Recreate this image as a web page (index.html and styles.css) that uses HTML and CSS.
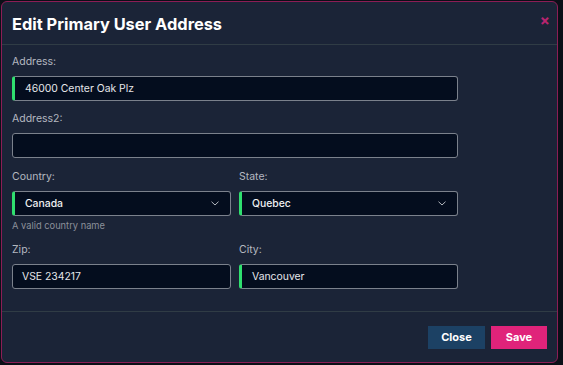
FILE: index.html
```html
<!DOCTYPE html>
<html lang="en">
<head>
    <meta charset="UTF-8">
    <title>Edit Primary User Address</title>
    <link rel="stylesheet" href="styles.css">
</head>
<body>
    <div class="modal">
        <div class="modal-header">
            <h2>Edit Primary User Address</h2>
            <span class="close">&times;</span>
        </div>
        <form class="modal-body">
            <div class="field">
                <label>Address:</label>
                <div class="input valid">46000 Center Oak Plz</div>
            </div>
            <div class="field">
                <label>Address2:</label>
                <div class="input"></div>
            </div>
            <div class="row">
                <div class="field">
                    <label>Country:</label>
                    <div class="input select valid">Canada
                        <svg width="8" height="5" viewBox="0 0 8 5"><path d="M0.5 0.7 L4 4 L7.5 0.7" fill="none" stroke="#b3b7be" stroke-width="1"/></svg>
                    </div>
                    <div class="help">A valid country name</div>
                </div>
                <div class="field">
                    <label>State:</label>
                    <div class="input select valid">Quebec
                        <svg width="8" height="5" viewBox="0 0 8 5"><path d="M0.5 0.7 L4 4 L7.5 0.7" fill="none" stroke="#b3b7be" stroke-width="1"/></svg>
                    </div>
                </div>
            </div>
            <div class="row">
                <div class="field">
                    <label>Zip:</label>
                    <div class="input plain">VSE 234217</div>
                </div>
                <div class="field">
                    <label>City:</label>
                    <div class="input valid">Vancouver</div>
                </div>
            </div>
        </form>
        <div class="modal-footer">
            <button class="btn btn-close">Close</button>
            <button class="btn btn-save">Save</button>
        </div>
    </div>
</body>
</html>
```

FILE: styles.css
```css
body { margin: 0; background: #0b0f17; font-family: Inter, "Noto Sans", sans-serif; color: #fff; padding: 1px 0 0 1px; }
.modal { width: 557px; height: 362px; background: #1b2437; border: 1px solid #8c1d55; border-radius: 6px; display: flex; flex-direction: column; box-sizing: border-box; }
.modal-header { height: 43px; display: flex; align-items: center; justify-content: space-between; padding: 0 7px 0 10px; border-bottom: 1px solid #303c45; box-sizing: border-box; }
.modal-header h2 { margin: 0; font-size: 16.4px; font-weight: 700; padding-top: 1px; }
.close { color: #b8246f; font-size: 15px; font-weight: 700; margin-top: -5px; }
.modal-body { flex: 1; width: 446px; padding: 10px 0 0 10px; display: flex; flex-direction: column; gap: 11px; }
.row { display: grid; grid-template-columns: 1fr 1fr; gap: 8px; }
.field + .row { margin-top: 1px; }
.field { display: flex; flex-direction: column; }
.field label { font-size: 10.5px; color: #b4b8c0; height: 14px; line-height: 14px; margin-bottom: 7px; }
.input { height: 25px; box-sizing: border-box; background: #040d1e; border: 1px solid #7b818c; border-radius: 3px; font-size: 10.4px; color: #e4e6ea; display: flex; align-items: center; padding-left: 10px; }
.input.valid { border-left: 3px solid #2fe06f; }
.input.plain { padding-left: 9px; }
.select { justify-content: space-between; padding-right: 11px; font-weight: 500; color: #f0f1f3; }
.help { font-size: 9.3px; color: #8b909a; margin-top: 4px; height: 12px; }
.modal-footer { height: 51px; box-sizing: border-box; border-top: 1px solid #303c45; display: flex; justify-content: flex-end; align-items: center; gap: 6px; padding: 0 10px 0 0; }
.btn { border: none; height: 23px; width: 56px; font-family: inherit; font-size: 11px; font-weight: 700; color: #fff; padding: 0; }
.btn-close { background: #1c4164; width: 57px; }
.btn-save { background: #e0237a; }
```
